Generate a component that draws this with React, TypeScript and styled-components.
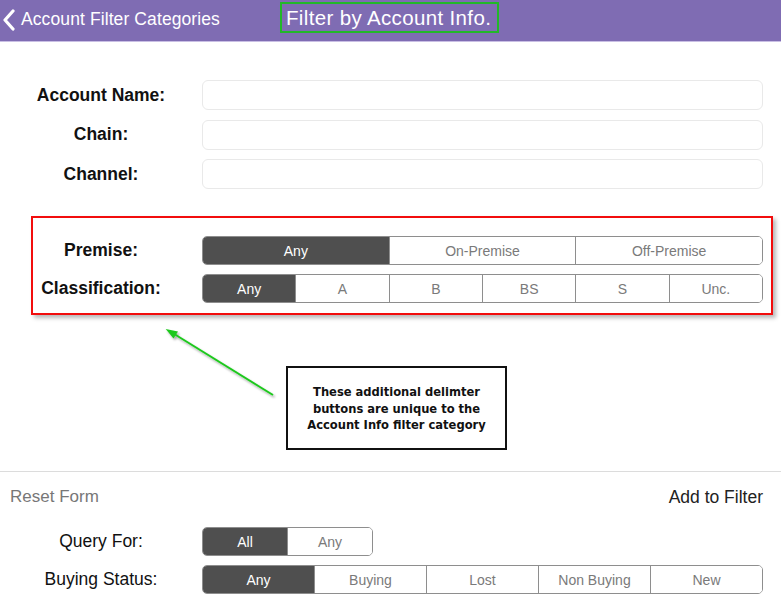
import React from "react";
import styled, { createGlobalStyle } from "styled-components";

const Global = createGlobalStyle`
  html, body { margin: 0; padding: 0; background: #fff; }
  body { font-family: "Liberation Sans", Arial, sans-serif; }
  * { box-sizing: border-box; }
`;

const Page = styled.div`
  position: relative;
  width: 781px;
  height: 599px;
  overflow: hidden;
  background: #fff;
  display: flex;
  flex-direction: column;
`;

const Header = styled.header`
  height: 42px;
  flex: none;
  background: #7f6cb3;
  border-bottom: 1px solid #c9bfe4;
  display: flex;
  align-items: center;
  color: #fff;
`;

const Back = styled.div`
  display: flex;
  align-items: center;
  gap: 5px;
  padding-left: 2px;
  width: 280px;
  font-size: 17.5px;
  letter-spacing: 0.1px;
  padding-bottom: 2px;
`;

const Title = styled.div`
  margin-top: -6px;
  height: 31px;
  border: 2px solid #22b829;
  padding: 0 6px 0 4px;
  display: flex;
  align-items: center;
  font-size: 20.5px;
  letter-spacing: 0.35px;
`;

const Form = styled.div`
  display: flex;
  flex-direction: column;
  gap: 9.5px;
  padding: 38px 18px 0 0;
`;

const Row = styled.div<{ $h?: number }>`
  display: grid;
  grid-template-columns: 202px 1fr;
  align-items: center;
  height: ${(p) => p.$h ?? 30}px;
`;

const Label = styled.div<{ $bold?: boolean; $shift?: number }>`
  text-align: center;
  font-size: 17.5px;
  font-weight: ${(p) => (p.$bold ? 700 : 400)};
  color: #111;
  padding-right: ${(p) => p.$shift ?? 0}px;
`;

const Input = styled.div`
  height: 30px;
  border: 1px solid #e9e9e9;
  border-radius: 6px;
  background: #fff;
`;

const Highlight = styled.div`
  margin: 27px 8px 0 31px;
  border: 2px solid #f20d0d;
  box-shadow: 3px 3px 4px rgba(0, 0, 0, 0.28);
  padding: 18px 8px 10px 0;
  display: flex;
  flex-direction: column;
  gap: 9px;
`;

const HRow = styled.div`
  display: grid;
  grid-template-columns: 169px 1fr;
  align-items: center;
  height: 29px;
`;

const Segmented = styled.div<{ $w?: number }>`
  display: flex;
  height: 29px;
  width: ${(p) => (p.$w ? `${p.$w}px` : "auto")};
  border: 1px solid #8e8e8e;
  border-radius: 5px;
  overflow: hidden;
`;

const Seg = styled.div<{ $on?: boolean }>`
  flex: 1;
  display: flex;
  align-items: center;
  justify-content: center;
  font-size: 14px;
  color: ${(p) => (p.$on ? "#fff" : "#7a7a7a")};
  background: ${(p) => (p.$on ? "#4f4f4f" : "#fff")};
  & + & {
    border-left: 1px solid #8e8e8e;
  }
`;

const Divider = styled.div`
  margin-top: 156px;
  height: 1px;
  background: #dcdcdc;
`;

const Actions = styled.div`
  height: 48px;
  display: flex;
  align-items: center;
  justify-content: space-between;
  padding: 2px 18px 0 10px;
  font-size: 17.5px;
`;

const Reset = styled.span`
  color: #777;
  font-size: 17px;
`;

const AddFilter = styled.span`
  color: #222;
`;

const Bottom = styled.div`
  display: flex;
  flex-direction: column;
  gap: 9px;
  padding: 7px 18px 0 0;
`;

const Callout = styled.div`
  position: absolute;
  left: 286px;
  top: 366px;
  width: 221px;
  height: 84px;
  border: 2px solid #111;
  background: #fff;
  display: flex;
  align-items: center;
  justify-content: center;
  text-align: center;
  font-family: "DejaVu Sans", Verdana, sans-serif;
  font-stretch: condensed;
  font-weight: 700;
  font-size: 12.8px;
  line-height: 16.5px;
  color: #111;
  padding-top: 2px;
`;

const ArrowSvg = styled.svg`
  position: absolute;
  left: 155px;
  top: 320px;
  overflow: visible;
`;

const Chevron = () => (
  <svg width="14" height="22" viewBox="0 0 14 22">
    <polyline points="11,2 3,11 11,20" fill="none" stroke="#fff" strokeWidth="3.2" strokeLinecap="round" strokeLinejoin="round" />
  </svg>
);

const SegGroup = ({ items, on, w }: { items: string[]; on: number; w?: number }) => (
  <Segmented $w={w}>
    {items.map((t, i) => (
      <Seg key={t} $on={i === on}>
        {t}
      </Seg>
    ))}
  </Segmented>
);

export default function App() {
  return (
    <Page>
      <Global />
      <Header>
        <Back>
          <Chevron />
          <span>Account Filter Categories</span>
        </Back>
        <Title>Filter by Account Info.</Title>
      </Header>

      <Form>
        <Row>
          <Label $bold>Account Name:</Label>
          <Input />
        </Row>
        <Row>
          <Label $bold>Chain:</Label>
          <Input />
        </Row>
        <Row>
          <Label $bold>Channel:</Label>
          <Input />
        </Row>
      </Form>

      <Highlight>
        <HRow>
          <Label $bold $shift={33}>Premise:</Label>
          <SegGroup items={["Any", "On-Premise", "Off-Premise"]} on={0} />
        </HRow>
        <HRow>
          <Label $bold $shift={33}>Classification:</Label>
          <SegGroup items={["Any", "A", "B", "BS", "S", "Unc."]} on={0} />
        </HRow>
      </Highlight>

      <Divider />
      <Actions>
        <Reset>Reset Form</Reset>
        <AddFilter>Add to Filter</AddFilter>
      </Actions>

      <Bottom>
        <Row $h={29}>
          <Label>Query For:</Label>
          <SegGroup items={["All", "Any"]} on={0} w={171} />
        </Row>
        <Row $h={29}>
          <Label>Buying Status:</Label>
          <SegGroup items={["Any", "Buying", "Lost", "Non Buying", "New"]} on={0} />
        </Row>
      </Bottom>

      <ArrowSvg width="130" height="90" viewBox="0 0 130 90">
        <defs>
          <filter id="sh" x="-20%" y="-20%" width="140%" height="140%">
            <feDropShadow dx="1.5" dy="2" stdDeviation="1" floodColor="#000" floodOpacity="0.35" />
          </filter>
        </defs>
        <g filter="url(#sh)">
          <line x1="118" y1="75" x2="16" y2="12" stroke="#1ec81e" strokeWidth="2" />
          <polygon points="10.7,9 23,11.5 18.5,18.5" fill="#1ec81e" />
        </g>
      </ArrowSvg>

      <Callout>
        These additional delimter
        <br />
        buttons are unique to the
        <br />
        Account Info filter category
      </Callout>
    </Page>
  );
}
